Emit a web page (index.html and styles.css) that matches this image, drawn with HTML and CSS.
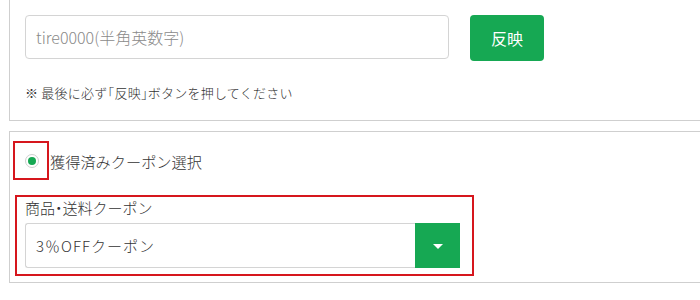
FILE: index.html
```html
<!DOCTYPE html>
<html lang="ja">
<head>
<meta charset="utf-8">
<link rel="stylesheet" href="styles.css">
</head>
<body>
<div class="page">
  <section class="box box-top">
    <div class="code-row">
      <div class="code-input">tire0000(半角英数字)</div>
      <button class="apply-btn">反映</button>
    </div>
    <p class="note">※ 最後に必ず<span class="half">「</span>反映<span class="half">」</span>ボタンを押してください</p>
  </section>
  <section class="box box-coupon">
    <div class="radio-row">
      <span class="radio-mark"><span class="radio"><span class="radio-dot"></span></span></span>
      <span class="radio-label">獲得済みクーポン選択</span>
    </div>
    <div class="coupon-field">
      <div class="field-label">商品<span class="half">・</span>送料クーポン</div>
      <div class="select">
        <div class="select-value">3％OFFクーポン</div>
        <div class="select-arrow"><span class="tri"></span></div>
      </div>
    </div>
  </section>
</div>
</body>
</html>
```

FILE: styles.css
```css
html, body {
  margin: 0;
  padding: 0;
  background: #fff;
  overflow: hidden;
}
body {
  font-family: "Noto Sans CJK JP", "Noto Sans", sans-serif;
  font-weight: 300;
  color: #333;
  width: 700px;
  height: 300px;
}
.page {
  padding-left: 9px;
  width: 760px;
}
.half {
  font-feature-settings: "halt";
}
.box {
  border: 1px solid #cfcfcf;
  background: #fff;
}
.box-top {
  border-top: 0;
  padding: 15px 15px 17px;
}
.code-row {
  display: flex;
  align-items: flex-start;
  gap: 21px;
}
.code-input {
  box-sizing: border-box;
  width: 424px;
  height: 44px;
  border: 1px solid #d4d4d4;
  border-radius: 4px;
  padding-left: 10px;
  display: flex;
  align-items: center;
  font-size: 16px;
  color: #8a8a8a;
}
.apply-btn {
  width: 74px;
  height: 46px;
  border: 0;
  border-radius: 4px;
  background: #16a853;
  color: #fff;
  font-family: inherit;
  font-weight: 400;
  font-size: 16px;
  padding: 0;
}
.note {
  margin: 22px 0 0;
  font-size: 13px;
  letter-spacing: 0.25px;
  line-height: 20px;
  color: #333;
}
.box-coupon {
  margin-top: 10px;
  padding: 9px 0 6px;
}
.radio-row {
  display: flex;
  align-items: center;
  margin-left: 3px;
}
.radio-mark {
  box-sizing: border-box;
  width: 36px;
  height: 39px;
  border: 2px solid #d6161d;
  display: flex;
  align-items: center;
  justify-content: center;
  padding-left: 2px;
}
.radio {
  box-sizing: border-box;
  width: 14px;
  height: 14px;
  border: 1px solid #cfcfcf;
  border-radius: 50%;
  display: flex;
  align-items: center;
  justify-content: center;
}
.radio-dot {
  width: 8px;
  height: 8px;
  border-radius: 50%;
  background: #16a853;
}
.radio-label {
  font-size: 15.2px;
  margin-left: 1px;
  color: #333;
}
.coupon-field {
  box-sizing: border-box;
  width: 459px;
  margin: 15px 0 0 5px;
  border: 2px solid #d6161d;
  padding: 1px 12px 6px 8px;
}
.field-label {
  font-size: 15px;
  line-height: 20px;
  margin-bottom: 5px;
}
.select {
  display: flex;
  height: 45px;
}
.select-value {
  box-sizing: border-box;
  flex: 1;
  border: 1px solid #d4d4d4;
  border-right: 0;
  border-radius: 3px 0 0 3px;
  padding-left: 10px;
  display: flex;
  align-items: center;
  font-size: 15px;
  letter-spacing: 1px;
  color: #333;
}
.select-arrow {
  width: 45px;
  background: #16a853;
  display: flex;
  align-items: center;
  justify-content: center;
}
.tri {
  width: 0;
  height: 0;
  border-left: 5px solid transparent;
  border-right: 5px solid transparent;
  border-top: 5px solid #fff;
  margin-top: 1px;
}
```
